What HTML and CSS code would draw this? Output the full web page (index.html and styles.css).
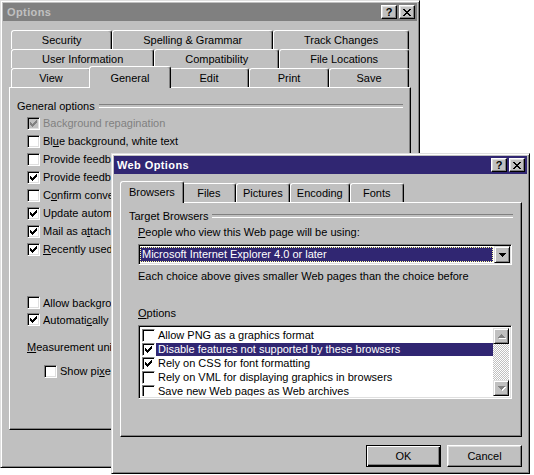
FILE: index.html
```html
<!DOCTYPE html>
<html>
<head>
<meta charset="utf-8">
<title>Options</title>
<link rel="stylesheet" href="styles.css">
</head>
<body>
<svg class="defs" width="0" height="0" aria-hidden="true">
  <symbol id="chk" viewBox="0 0 7 7"><path d="M6 0h1v1h-1zM5 1h2v1h-2zM0 2h1v1h-1zM4 2h3v1h-3zM0 3h2v1h-2zM3 3h3v1h-3zM0 4h5v1h-5zM1 5h3v1h-3zM2 6h1v1h-1z"/></symbol>
  <symbol id="close" viewBox="0 0 8 7"><path d="M0 0h2v1h-2zM6 0h2v1h-2zM1 1h2v1h-2zM5 1h2v1h-2zM2 2h4v1h-4zM3 3h2v1h-2zM2 4h4v1h-4zM1 5h2v1h-2zM5 5h2v1h-2zM0 6h2v1h-2zM6 6h2v1h-2z"/></symbol>
  <symbol id="down" viewBox="0 0 7 4"><path d="M0 0h7v1h-7zM1 1h5v1h-5zM2 2h3v1h-3zM3 3h1v1h-1z"/></symbol>
  <symbol id="up" viewBox="0 0 7 4"><path d="M3 0h1v1h-1zM2 1h3v1h-3zM1 2h5v1h-5zM0 3h7v1h-7z"/></symbol>
</svg>
<div class="desktop">

  <div class="win win-options">
    <div class="titlebar inactive">
      <span class="title">Options</span>
      <span class="tb-btns">
        <span class="tbtn q">?</span>
        <span class="tbtn"><svg class="xg" viewBox="0 0 8 7"><use href="#close"/></svg></span>
      </span>
    </div>
    <div class="tabctl opt-tabctl">
      <div class="tabrow back">
        <span class="tab">Security</span>
        <span class="tab">Spelling &amp; Grammar</span>
        <span class="tab">Track Changes</span>
      </div>
      <div class="tabrow back">
        <span class="tab">User Information</span>
        <span class="tab">Compatibility</span>
        <span class="tab">File Locations</span>
      </div>
      <div class="tabrow front even">
        <span class="tab">View</span>
        <span class="tab sel">General</span>
        <span class="tab">Edit</span>
        <span class="tab">Print</span>
        <span class="tab">Save</span>
      </div>
    </div>
    <div class="panel opt-panel">
      <div class="grp">General options</div>
      <div class="opts">
        <div class="cbrow disabled"><span class="cb on"><svg class="ck" viewBox="0 0 7 7"><use href="#chk"/></svg></span><span>Background repagination</span></div>
        <div class="cbrow"><span class="cb"></span><span>Bl<u>u</u>e background, white text</span></div>
        <div class="cbrow"><span class="cb"></span><span>Provide feedback with sound</span></div>
        <div class="cbrow"><span class="cb on"><svg class="ck" viewBox="0 0 7 7"><use href="#chk"/></svg></span><span>Provide feedback with animation</span></div>
        <div class="cbrow"><span class="cb"></span><span>C<u>o</u>nfirm conversion at Open</span></div>
        <div class="cbrow"><span class="cb on"><svg class="ck" viewBox="0 0 7 7"><use href="#chk"/></svg></span><span>Update automatic links at Open</span></div>
        <div class="cbrow"><span class="cb on"><svg class="ck" viewBox="0 0 7 7"><use href="#chk"/></svg></span><span>Mail as a<u>t</u>tachment</span></div>
        <div class="cbrow"><span class="cb on"><svg class="ck" viewBox="0 0 7 7"><use href="#chk"/></svg></span><span><u>R</u>ecently used file list</span></div>
      </div>
      <div class="opts opts2">
        <div class="cbrow tight"><span class="cb"></span><span>Allow background open of web pages</span></div>
        <div class="cbrow tight"><span class="cb on"><svg class="ck" viewBox="0 0 7 7"><use href="#chk"/></svg></span><span>Automati<u>c</u>ally create drawing canvas</span></div>
      </div>
      <div class="measure"><u>M</u>easurement units:</div>
      <div class="cbrow pix"><span class="cb"></span><span>Show pi<u>x</u>els for HTML features</span></div>
    </div>
  </div>

  <div class="win win-web">
    <div class="titlebar active">
      <span class="title">Web Options</span>
      <span class="tb-btns">
        <span class="tbtn q">?</span>
        <span class="tbtn"><svg class="xg" viewBox="0 0 8 7"><use href="#close"/></svg></span>
      </span>
    </div>
    <div class="tabctl web-tabctl">
      <div class="tabrow front fit">
        <span class="tab sel">Browsers</span>
        <span class="tab">Files</span>
        <span class="tab">Pictures</span>
        <span class="tab">Encoding</span>
        <span class="tab">Fonts</span>
      </div>
    </div>
    <div class="panel web-panel">
      <div class="grp">Target Browsers</div>
      <div class="line ppl"><u>P</u>eople who view this Web page will be using:</div>
      <div class="combo">
        <span class="cval">Microsoft Internet Explorer 4.0 or later</span>
        <span class="cbtn"><svg class="arr" viewBox="0 0 7 4"><use href="#down"/></svg></span>
      </div>
      <div class="line each">Each choice above gives smaller Web pages than the choice before</div>
      <div class="line optlbl"><u>O</u>ptions</div>
      <div class="list">
        <div class="items">
          <div class="item"><span class="cb flat"></span><span class="txt">Allow PNG as a graphics format</span></div>
          <div class="item sel"><span class="cb flat"><svg class="ck" viewBox="0 0 7 7"><use href="#chk"/></svg></span><span class="txt">Disable features not supported by these browsers</span></div>
          <div class="item"><span class="cb flat"><svg class="ck" viewBox="0 0 7 7"><use href="#chk"/></svg></span><span class="txt">Rely on CSS for font formatting</span></div>
          <div class="item"><span class="cb flat"></span><span class="txt">Rely on VML for displaying graphics in browsers</span></div>
          <div class="item"><span class="cb flat"></span><span class="txt">Save new Web pages as Web archives</span></div>
        </div>
        <div class="sbar">
          <span class="sbtn"><svg class="arr dis" viewBox="0 0 7 4"><use href="#up"/></svg></span>
          <span class="strack"></span>
          <span class="sbtn"><svg class="arr dis" viewBox="0 0 7 4"><use href="#down"/></svg></span>
        </div>
      </div>
    </div>
    <div class="btnrow">
      <span class="btn default">OK</span>
      <span class="btn">Cancel</span>
    </div>
  </div>

</div>
</body>
</html>
```

FILE: styles.css
```css
* { box-sizing: border-box; }

body {
  margin: 0;
  background: #fff;
  font-family: "Liberation Sans", Arial, sans-serif;
  font-size: 11px;
  color: #000;
}

.defs { position: absolute; width: 0; height: 0; overflow: hidden; }

.desktop {
  position: relative;
  width: 534px;
  height: 475px;
  overflow: hidden;
}

/* ---------- windows ---------- */
.win {
  position: absolute;
  background: #c0c0c0;
  border: 1px solid;
  border-color: #dfdfdf #000 #000 #dfdfdf;
  box-shadow: inset 1px 1px #fff, inset -1px -1px #808080;
  padding: 2px;
  display: flex;
  flex-direction: column;
}
.win-options { left: 0; top: 0; width: 420px; height: 468px; }
.win-web { left: 111px; top: 153px; width: 419px; height: 321px; }

.titlebar {
  height: 18px;
  flex: none;
  display: flex;
  align-items: center;
  padding: 0 2px 0 4px;
}
.titlebar.inactive { background: #808080; color: #c0c0c0; }
.titlebar.active { background: #302672; color: #fff; padding-left: 3px; }
.title { flex: 1; font-weight: bold; letter-spacing: 0.4px; white-space: nowrap; }

.tb-btns { display: flex; gap: 2px; }
.tbtn {
  width: 16px;
  height: 14px;
  background: #c0c0c0;
  border: 1px solid;
  border-color: #fff #000 #000 #fff;
  box-shadow: inset -1px -1px #808080, inset 1px 1px #dfdfdf;
  display: flex;
  align-items: center;
  justify-content: center;
  color: #000;
}
.tbtn.q { font-weight: bold; font-size: 11px; line-height: 12px; }
.xg { width: 8px; height: 7px; display: block; shape-rendering: crispEdges; fill: #000; }

/* ---------- tabs ---------- */
.tabctl { flex: none; }
.opt-tabctl { margin: 9px 6px 0 6px; }
.web-tabctl { margin: 7px 5px 0 6px; }

.tabrow { display: flex; height: 19px; padding: 0 2px; }
.tabrow.front { height: 21px; align-items: flex-end; position: relative; }
.opt-tabctl .tabrow.front { margin-top: -2px; }

.tab {
  height: 19px;
  flex: 1 1 auto;
  background: #c0c0c0;
  border: 1px solid;
  border-bottom: 0;
  border-color: #fff #000 transparent #fff;
  border-radius: 3px 3px 0 0;
  box-shadow: inset -1px 0 #808080;
  display: flex;
  align-items: center;
  justify-content: center;
  white-space: nowrap;
  padding: 0 4px;
}
.tabrow.even .tab { flex: 1 1 0; padding: 0; }
.tab.sel {
  height: 22px;
  margin: 0 -2px -1px;
  padding-bottom: 2px;
  position: relative;
  z-index: 1;
}
.tabrow.even .tab.sel { flex: 1 1 4px; }
.tabrow.fit .tab { flex: none; min-width: 54px; padding: 0 6px; }
.tabrow.fit .tab.sel { padding: 0 8px 2px; }

/* ---------- panels ---------- */
.panel {
  flex: none;
  border: 1px solid;
  border-color: #fff #000 #000 #fff;
  box-shadow: inset -1px -1px #808080;
}
.opt-panel { margin: 0 6px; height: 343px; padding: 11px 7px 0 7px; }
.web-panel { margin: 0 5px 0 6px; height: 235px; padding: 6px 8px 0 8px; }

.grp { display: flex; align-items: center; height: 13px; white-space: nowrap; }
.grp::after {
  content: "";
  flex: 1;
  height: 2px;
  border-top: 1px solid #808080;
  border-bottom: 1px solid #fff;
  margin: 1px 0 0 4px;
}

/* ---------- checkboxes ---------- */
.opts { margin: 2px 0 0 10px; }
.opts2 { margin-top: 36px; }
.cbrow {
  display: flex;
  align-items: center;
  gap: 3px;
  height: 18px;
  white-space: nowrap;
}
.cbrow.tight { height: 17px; }
.cbrow.disabled { color: #808080; }

.cb {
  width: 13px;
  height: 13px;
  flex: none;
  background: #fff;
  border: 1px solid;
  border-color: #808080 #fff #fff #808080;
  box-shadow: inset 1px 1px #000, inset -1px -1px #dfdfdf;
}
.cbrow.disabled .cb { background: #c0c0c0; }
.cb.flat { box-shadow: inset 1px 1px #000; }
.ck { display: block; width: 7px; height: 7px; margin: 2px; fill: #000; shape-rendering: crispEdges; }
.cbrow.disabled .ck { fill: #808080; }

.measure { margin: 13px 0 0 10px; height: 13px; line-height: 13px; white-space: nowrap; }
.cbrow.pix { margin: 8px 0 0 27px; }

/* ---------- web options content ---------- */
.line { height: 13px; line-height: 13px; white-space: nowrap; margin-left: 9px; }
.ppl { margin-top: 4px; }
.each { margin-top: 5px; }
.optlbl { margin-top: 24px; }

.combo {
  margin: 5px 0 0 9px;
  width: 374px;
  height: 21px;
  background: #fff;
  border: 1px solid;
  border-color: #808080 #fff #fff #808080;
  box-shadow: inset 1px 1px #000, inset -1px -1px #dfdfdf;
  padding: 1px;
  display: flex;
}
.cval {
  flex: 1;
  margin: 1px 1px 1px 0;
  background: #302672;
  color: #fff;
  border: 1px dotted #ffffa0;
  padding-left: 1px;
  line-height: 13px;
  white-space: nowrap;
}
.cbtn, .sbtn {
  width: 16px;
  height: 17px;
  flex: none;
  background: #c0c0c0;
  border: 1px solid;
  border-color: #dfdfdf #000 #000 #dfdfdf;
  box-shadow: inset 1px 1px #fff, inset -1px -1px #808080;
  display: flex;
  align-items: center;
  justify-content: center;
}
.arr { display: block; width: 7px; height: 4px; fill: #000; shape-rendering: crispEdges; }
.arr.dis { fill: #808080; filter: drop-shadow(1px 1px 0 #fff); }

.list {
  margin: 5px 0 0 9px;
  width: 374px;
  height: 74px;
  background: #fff;
  border: 1px solid;
  border-color: #808080 #fff #fff #808080;
  box-shadow: inset 1px 1px #000, inset -1px -1px #dfdfdf;
  padding: 2px;
  display: flex;
}
.items { flex: 1; overflow: hidden; }
.item { height: 14px; display: flex; align-items: center; white-space: nowrap; }
.item .cb { margin: 0 1px 0 1px; }
.item .txt { flex: 1; height: 13px; line-height: 13px; padding-left: 2px; }
.item.sel .txt { background: #302672; color: #fff; }

.sbar { width: 16px; flex: none; display: flex; flex-direction: column; }
.sbar .sbtn { height: 16px; }
.strack {
  flex: 1;
  background: repeating-conic-gradient(#fff 0 25%, #c0c0c0 0 50%) 0 0 / 2px 2px;
}

/* ---------- buttons ---------- */
.btnrow {
  flex: none;
  display: flex;
  justify-content: flex-end;
  gap: 6px;
  margin: 8px 5px 0 0;
}
.btn {
  width: 75px;
  height: 22px;
  background: #c0c0c0;
  border: 1px solid;
  border-color: #fff #000 #000 #fff;
  box-shadow: inset -1px -1px #808080, inset 1px 1px #dfdfdf;
  display: flex;
  align-items: center;
  justify-content: center;
}
.btn.default {
  border-color: #000;
  box-shadow: inset 1px 1px #fff, inset -1px -1px #000, inset -2px -2px #808080;
}
```
